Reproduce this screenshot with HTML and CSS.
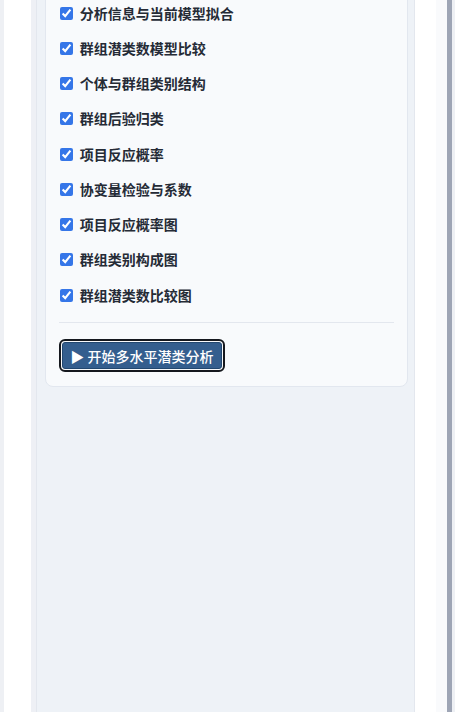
FILE: index.html
```html
<!DOCTYPE html>
<html lang="zh">
<head>
<meta charset="utf-8">
<link rel="stylesheet" href="styles.css">
</head>
<body>
<div class="page">
  <div class="edge-left"></div>
  <div class="gutter-left"></div>
  <div class="shade-left"></div>
  <div class="panel">
    <div class="card">
      <label class="row"><input type="checkbox" checked><span>分析信息与当前模型拟合</span></label>
      <label class="row"><input type="checkbox" checked><span>群组潜类数模型比较</span></label>
      <label class="row"><input type="checkbox" checked><span>个体与群组类别结构</span></label>
      <label class="row"><input type="checkbox" checked><span>群组后验归类</span></label>
      <label class="row"><input type="checkbox" checked><span>项目反应概率</span></label>
      <label class="row"><input type="checkbox" checked><span>协变量检验与系数</span></label>
      <label class="row"><input type="checkbox" checked><span>项目反应概率图</span></label>
      <label class="row"><input type="checkbox" checked><span>群组类别构成图</span></label>
      <label class="row"><input type="checkbox" checked><span>群组潜类数比较图</span></label>
      <div class="divider"></div>
      <button class="run">▶ 开始多水平潜类分析</button>
    </div>
  </div>
  <div class="gutter-right"></div>
  <div class="strip-right"></div>
  <div class="scrollbar"></div>
  <div class="edge-right"></div>
</div>
</body>
</html>
```

FILE: styles.css
```css
html, body {
  margin: 0;
  padding: 0;
  height: 100%;
  overflow: hidden;
  background: #ffffff;
  font-family: "Noto Sans CJK SC", "Noto Sans", sans-serif;
}
.page {
  display: flex;
  height: 712px;
  width: 455px;
}
.edge-left { width: 4px; background: #eef0f4; }
.gutter-left { width: 28px; background: #ffffff; }
.shade-left { width: 5px; background: #eef0f5; }
.panel {
  width: 375px;
  background: #eef2f7;
  border-left: 1px solid #e3e7ee;
  border-right: 1px solid #e3e7ee;
  padding: 0 6px 0 8px;
  overflow: hidden;
}
.card {
  margin-top: -22px;
  background: #f8fafc;
  border: 1px solid #e2e7ef;
  border-radius: 8px;
  padding: 16px 13px 14px 13px;
  display: flex;
  flex-direction: column;
}
.row {
  height: 35.25px;
  display: flex;
  align-items: center;
  gap: 7px;
  font-size: 14px;
  font-weight: 700;
  color: #252b36;
}
.row input {
  width: 13px;
  height: 13px;
  margin: 1px 0 0 1px;
  accent-color: #3576e8;
}
.divider {
  height: 1px;
  background: #e3e7ee;
  margin: 10px 0 16px 0;
}
.run {
  align-self: flex-start;
  margin: 3px 0 3px 3px;
  width: 160px;
  height: 27px;
  background: #345e8e;
  border: 1px solid #22476f;
  border-radius: 3px;
  outline: 2px solid #15181e;
  outline-offset: 1px;
  color: #ffffff;
  font-family: "Noto Sans CJK SC", "Noto Sans", sans-serif;
  font-size: 14px;
  font-weight: 500;
  padding: 0;
  display: flex;
  align-items: center;
  justify-content: center;
}
.gutter-right { width: 21px; background: #ffffff; }
.strip-right { width: 12px; background: #f9fafc; }
.scrollbar { width: 5px; background: #9ea5b5; }
.edge-right { width: 3px; background: #eef0f4; }
```
